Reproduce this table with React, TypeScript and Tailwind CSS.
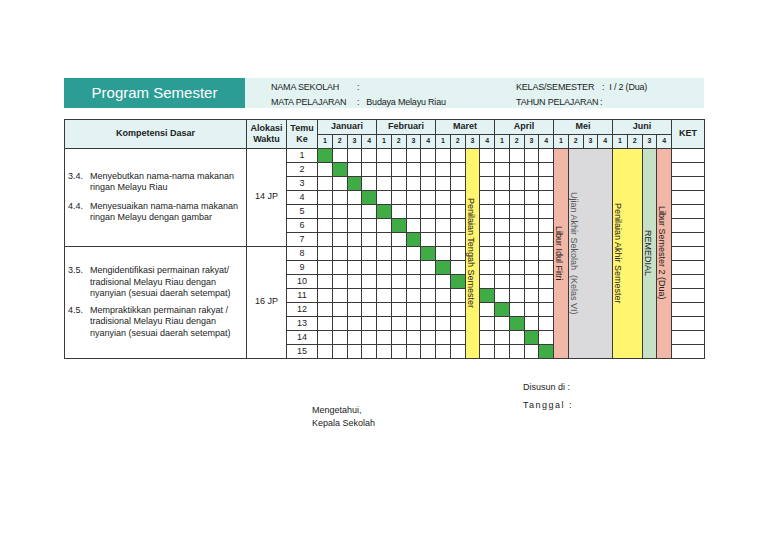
import React from "react";

const months = ["Januari", "Februari", "Maret", "April", "Mei", "Juni"];

const cell = "border border-[#3a3a3a] p-0";

// green marker column per row (0 based week index), Maret minggu 3 is skipped
const greenCol = (r: number) => (r <= 9 ? r : r + 1);

function Vertical({ text, className = "" }: { text: string; className?: string }) {
  return (
    <div className={`mx-auto whitespace-pre text-[9px] leading-none [writing-mode:vertical-rl] ${className}`}>
      {text}
    </div>
  );
}

function KdItem({ no, lines }: { no: string; lines: string[] }) {
  return (
    <div className="flex">
      <span className="w-[22px] shrink-0">{no}</span>
      <div>
        {lines.map((l) => (
          <div key={l}>{l}</div>
        ))}
      </div>
    </div>
  );
}

export default function App() {
  const rows = Array.from({ length: 15 }, (_, r) => r);

  return (
    <div
      className="min-h-screen bg-white pl-[64px] pt-[78px] text-[#222]"
      style={{ fontFamily: '"Liberation Sans", Arial, sans-serif' }}
    >
      {/* Banner */}
      <div className="flex h-[30px] w-[640px]">
        <div className="flex w-[181px] items-center justify-center bg-[#2b9d94] text-[15px] text-white">
          Program Semester
        </div>
        <div className="flex flex-1 bg-[#e3f3f1] pl-[26px] pt-[2px] text-[9px] leading-[15px] tracking-[-0.2px]">
          <div className="w-[245px]">
            <div className="flex">
              <span className="w-[86px]">NAMA SEKOLAH</span>
              <span>:</span>
            </div>
            <div className="flex">
              <span className="w-[86px]">MATA PELAJARAN</span>
              <span>:</span>
              <span className="ml-[7px]">Budaya Melayu Riau</span>
            </div>
          </div>
          <div>
            <div className="flex">
              <span className="w-[86px]">KELAS/SEMESTER</span>
              <span>:</span>
              <span className="ml-[5px]">I / 2 (Dua)</span>
            </div>
            <div className="flex">
              <span className="w-[84px]">TAHUN PELAJARAN</span>
              <span>:</span>
            </div>
          </div>
        </div>
      </div>

      {/* Table */}
      <table className="mt-[11px] w-[640px] table-fixed border-collapse border border-[#3a3a3a]">
        <colgroup>
          <col className="w-[182px]" />
          <col className="w-[40px]" />
          <col className="w-[31px]" />
          {Array.from({ length: 24 }, (_, i) => (
            <col key={i} className="w-[14.75px]" />
          ))}
          <col className="w-[33px]" />
        </colgroup>
        <thead>
          <tr className="h-[14px]">
            <th rowSpan={2} className={`${cell} bg-[#e3f3f3] text-[9px] font-bold`}>
              Kompetensi Dasar
            </th>
            <th rowSpan={2} className={`${cell} bg-[#e3f3f3] text-[9px] font-bold leading-[11px]`}>
              Alokasi
              <br />
              Waktu
            </th>
            <th rowSpan={2} className={`${cell} bg-[#e3f3f3] text-[9px] font-bold leading-[11px]`}>
              Temu
              <br />
              Ke
            </th>
            {months.map((m) => (
              <th key={m} colSpan={4} className={`${cell} bg-[#e3f3f3] text-[9px] font-bold`}>
                {m}
              </th>
            ))}
            <th rowSpan={2} className={`${cell} bg-[#e3f3f3] text-[9px] font-bold`}>
              KET
            </th>
          </tr>
          <tr className="h-[14px]">
            {Array.from({ length: 24 }, (_, i) => (
              <th key={i} className={`${cell} bg-[#e3f3f3] text-[7px] font-bold`}>
                {(i % 4) + 1}
              </th>
            ))}
          </tr>
        </thead>
        <tbody>
          {rows.map((r) => (
            <tr key={r} className="h-[14px]">
              {r === 0 && (
                <>
                  <td rowSpan={7} className={`${cell} px-[3px] align-middle text-[9px] leading-[11px]`}>
                    <KdItem no="3.4." lines={["Menyebutkan nama-nama makanan", "ringan Melayu Riau"]} />
                    <div className="h-[8px]" />
                    <KdItem no="4.4." lines={["Menyesuaikan nama-nama makanan", "ringan Melayu dengan gambar"]} />
                  </td>
                  <td rowSpan={7} className={`${cell} text-center text-[9px]`}>
                    14 JP
                  </td>
                </>
              )}
              {r === 7 && (
                <>
                  <td rowSpan={8} className={`${cell} px-[3px] align-middle text-[9px] leading-[11.5px]`}>
                    <KdItem
                      no="3.5."
                      lines={[
                        "Mengidentifikasi permainan rakyat/",
                        "tradisional Melayu Riau dengan",
                        "nyanyian (sesuai daerah setempat)",
                      ]}
                    />
                    <div className="h-[5px]" />
                    <KdItem
                      no="4.5."
                      lines={[
                        "Mempraktikkan permainan rakyat /",
                        "tradisional Melayu Riau dengan",
                        "nyanyian (sesuai daerah setempat)",
                      ]}
                    />
                  </td>
                  <td rowSpan={8} className={`${cell} text-center text-[9px]`}>
                    16 JP
                  </td>
                </>
              )}
              <td className={`${cell} text-center text-[9px] leading-none`}>{r + 1}</td>
              {Array.from({ length: 16 }, (_, c) => {
                if (c === 10) {
                  return r === 0 ? (
                    <td key={c} rowSpan={15} className={`${cell} bg-[#fff56f]`}>
                      <Vertical text="Penilaian Tengah Semester" />
                    </td>
                  ) : null;
                }
                return (
                  <td key={c} className={`${cell} ${greenCol(r) === c ? "bg-[#3fac45]" : ""}`} />
                );
              })}
              {r === 0 && (
                <>
                  <td rowSpan={15} className={`${cell} bg-[#f2b7a6]`}>
                    <Vertical text="Libur Idul Fitri" />
                  </td>
                  <td colSpan={3} rowSpan={15} className={`${cell} bg-[#dadadc]`}>
                    <Vertical text="Ujian Akhir Sekolah  (Kelas VI)" className="text-[#555]" />
                  </td>
                  <td colSpan={2} rowSpan={15} className={`${cell} bg-[#fff56f]`}>
                    <Vertical text="Penilaian Akhir Semester" />
                  </td>
                  <td rowSpan={15} className={`${cell} bg-[#c7e1c6]`}>
                    <Vertical text="REMEDIAL" />
                  </td>
                  <td rowSpan={15} className={`${cell} bg-[#f2b7a6]`}>
                    <Vertical text="Libur Semester 2 (Dua)" />
                  </td>
                </>
              )}
              <td className={cell} />
            </tr>
          ))}
        </tbody>
      </table>

      {/* Footer */}
      <div className="mt-[22px] flex w-[640px] text-[9px] leading-[13px]">
        <div className="ml-[248px] mt-[23px]">
          <div>Mengetahui,</div>
          <div>Kepala Sekolah</div>
        </div>
        <div className="ml-[148px]">
          <div className="mb-[5px]">Disusun di :</div>
          <div className="tracking-[1.5px]">Tanggal :</div>
        </div>
      </div>
    </div>
  );
}
